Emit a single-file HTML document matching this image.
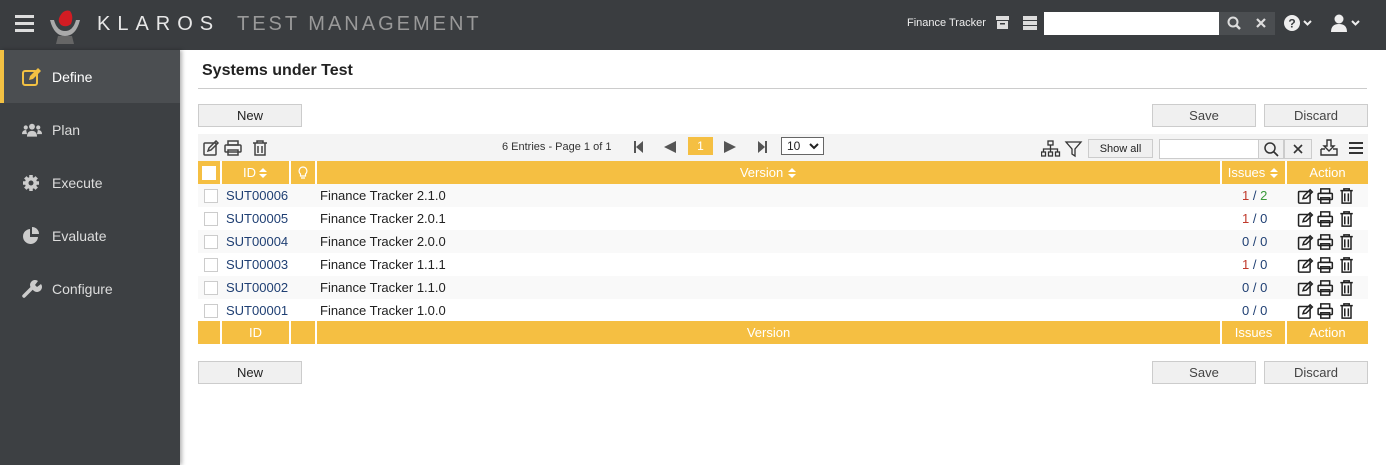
<!DOCTYPE html>
<html><head><style>
*{box-sizing:border-box;margin:0;padding:0}
body{width:1386px;height:465px;overflow:hidden;font-family:"Liberation Sans",sans-serif;background:#fff;position:relative;font-size:13px;color:#222}
.top{position:absolute;left:0;top:0;width:1386px;height:50px;background:#3a3d40}
.side{position:absolute;left:0;top:50px;width:180px;height:415px;background:#3d4043;box-shadow:2px 0 4px rgba(0,0,0,.3)}
.item{height:53px;display:flex;align-items:center;padding-left:22px;color:#ddd;font-size:14px}
.item svg{margin-right:10px}
.item.act{background:#4b4e51;border-left:4px solid #f3c143;padding-left:18px;color:#fff}
.abs{position:absolute}
.btn{position:absolute;height:23px;background:#f0f0f0;border:1px solid #ccc;font-size:13px;display:flex;align-items:center;justify-content:center;color:#222}
.row{position:absolute;left:198px;width:1170px;height:23px;font-size:13px}
.c{position:absolute;top:0;height:100%;display:flex;align-items:center}
.hdr{background:#f5bf42;color:#fff}
.hdr .c{border-right:2px solid #fff;justify-content:center}
.cb{width:14px;height:14px;border:1px solid #ccc;background:#fff}
.id{color:#1f3f73}
</style></head><body>
<div class="top">
<svg class="abs" style="left:15px;top:15px" width="19" height="17"><rect y="0" width="19" height="3" fill="#ddd"/><rect y="7" width="19" height="3" fill="#ddd"/><rect y="14" width="19" height="3" fill="#ddd"/></svg>
<svg class="abs" style="left:48px;top:8px" width="34" height="36"><path d="M2 12 Q6 28 17 28 Q28 28 32 12 L28 12 Q25 23 17 23 Q9 23 6 12Z" fill="#aaa"/><path d="M10 28 L24 28 L26 36 L8 36Z" fill="#666"/><path d="M12 8 Q16 1 22 3 Q26 8 23 16 Q18 20 13 17 Q9 13 12 8Z" fill="#d21c23"/></svg>
<div class="abs" style="left:97px;top:13px;font-size:20px;letter-spacing:7px;color:#e8e8e8">KLAROS</div>
<div class="abs" style="left:237px;top:13px;font-size:20px;letter-spacing:3px;color:#999">TEST MANAGEMENT</div>
<div class="abs" style="left:907px;top:17px;font-size:11px;color:#eee">Finance Tracker</div>
<svg class="abs" style="left:996px;top:16px" width="13" height="13"><rect width="13" height="4" fill="#ddd"/><rect x="1" y="5" width="11" height="8" fill="#ddd"/><rect x="4" y="7" width="5" height="1.5" fill="#3a3d40"/></svg>
<svg class="abs" style="left:1023px;top:16px" width="14" height="14"><rect width="14" height="4" fill="#ddd"/><rect y="5" width="14" height="4" fill="#ddd"/><rect y="10" width="14" height="4" fill="#ddd"/></svg>
<div class="abs" style="left:1044px;top:12px;width:175px;height:23px;background:#fff"></div>
<div class="abs" style="left:1219px;top:12px;width:56px;height:23px;background:#4b4e51"></div>
<svg class="abs" style="left:1227px;top:16px" width="14" height="14"><circle cx="6" cy="6" r="4.5" stroke="#ddd" stroke-width="2" fill="none"/><path d="M9 9L13 13" stroke="#ddd" stroke-width="2.5"/></svg>
<svg class="abs" style="left:1256px;top:18px" width="10" height="10"><path d="M1 1L9 9M9 1L1 9" stroke="#ddd" stroke-width="2.2"/></svg>
<svg class="abs" style="left:1284px;top:14px" width="30" height="18"><circle cx="8" cy="9" r="8" fill="#eee"/><text x="8" y="13.5" font-size="12" font-weight="bold" text-anchor="middle" fill="#3a3d40">?</text><path d="M20 7l3.5 3.5L27 7" stroke="#eee" stroke-width="2" fill="none"/></svg>
<svg class="abs" style="left:1331px;top:14px" width="30" height="18"><circle cx="8" cy="5" r="4.5" fill="#eee"/><path d="M0 18Q0 10 8 10Q16 10 16 18Z" fill="#eee"/><path d="M21 7l3.5 3.5L28 7" stroke="#eee" stroke-width="2" fill="none"/></svg>
</div>
<div class="side">
<div class="item act"><svg width="20" height="18"><rect x="1" y="3" width="14" height="14" rx="2" stroke="#f3c143" stroke-width="2" fill="none"/><path d="M7 12l1-4 8-8 3 3-8 8z" fill="#f3c143"/></svg>Define</div>
<div class="item"><svg width="20" height="16" viewBox="0 0 24 16"><circle cx="12" cy="4" r="3.5" fill="#ccc"/><circle cx="4.5" cy="5" r="2.5" fill="#ccc"/><circle cx="19.5" cy="5" r="2.5" fill="#ccc"/><path d="M6 16Q6 9 12 9Q18 9 18 16Z" fill="#ccc"/><path d="M0 13Q0 8 5 8L6 13ZM24 13Q24 8 19 8L18 13Z" fill="#ccc"/></svg>Plan</div>
<div class="item"><svg width="20" height="18"><circle cx="9" cy="9" r="6" fill="#ccc"/><g stroke="#ccc" stroke-width="3.5"><path d="M9 1v16M1 9h16M3.3 3.3l11.4 11.4M14.7 3.3L3.3 14.7"/></g><circle cx="9" cy="9" r="2.5" fill="#3d4043"/></svg>Execute</div>
<div class="item"><svg width="20" height="18"><path d="M8 2A7.5 7.5 0 1 0 16 10L8 10Z" fill="#ccc"/><path d="M10 0A7 7 0 0 1 17 7L10 7Z" fill="#ccc"/></svg>Evaluate</div>
<div class="item"><svg width="20" height="18"><path d="M2 16L10 8" stroke="#ccc" stroke-width="3.5" stroke-linecap="round"/><path d="M9 8A5 5 0 0 1 16 1L13 5 15 7 19 4A5 5 0 0 1 12 11Z" fill="#ccc"/></svg>Configure</div>
</div>
<div class="abs" style="left:202px;top:62px;font-size:16px;font-weight:bold;color:#222">Systems under Test</div>
<div class="abs" style="left:198px;top:88px;width:1169px;height:1px;background:#ccc"></div>
<div class="btn" style="left:198px;top:104px;width:104px">New</div>
<div class="btn" style="left:1152px;top:104px;width:104px;color:#444">Save</div>
<div class="btn" style="left:1264px;top:104px;width:104px;color:#444">Discard</div>
<div class="abs" style="left:198px;top:134px;width:1170px;height:27px;background:#f4f4f4"></div>
<svg class="abs" style="left:203px;top:140px" width="70" height="16" fill="none" stroke="#444" stroke-width="1.5"><rect x="1" y="3" width="12" height="12" rx="1"/><path d="M5 11l1-3 7-7 2 2-7 7z"/><rect x="25" y="1" width="10" height="4"/><rect x="22" y="5" width="16" height="7" rx="1"/><rect x="25" y="10" width="10" height="5"/><path d="M50 3h14M54 3V1h6v2M52 3v12h10V3M55 6v7M59 6v7"/></svg>
<div class="abs" style="left:502px;top:141px;font-size:11px;color:#333">6 Entries - Page 1 of 1</div>
<svg class="abs" style="left:634px;top:140px" width="140" height="14" fill="#555"><rect x="0" y="1" width="2" height="12"/><path d="M2 7l7-6v12z"/><path d="M30 7l12-6v12z"/><path d="M90 1l12 6-12 6z"/><path d="M124 1l7 6-7 6z"/><rect x="131" y="1" width="2" height="12"/></svg>
<div class="abs" style="left:688px;top:137px;width:25px;height:18px;background:#f5bf42;color:#fff;font-size:12px;text-align:center;line-height:18px">1</div>
<div class="abs" style="left:781px;top:137px;width:43px;height:18px;border:1px solid #666;background:#fff;font-size:12px;padding-left:5px;line-height:16px">10<svg style="position:absolute;right:4px;top:5px" width="10" height="7"><path d="M1 1l4 4 4-4" stroke="#222" stroke-width="2" fill="none"/></svg></div>
<svg class="abs" style="left:1041px;top:140px" width="42" height="18" fill="none" stroke="#333" stroke-width="1.3"><rect x="7" y="1" width="5" height="4"/><path d="M9.5 5v4M2.5 12V9h14v3M9.5 9v3"/><rect x="0.5" y="12" width="4" height="4"/><rect x="7.5" y="12" width="4" height="4"/><rect x="14.5" y="12" width="4" height="4"/><path d="M25 2h15l-6 7v7l-3-2V9z"/></svg>
<div class="btn" style="left:1088px;top:139px;width:65px;height:19px;font-size:11px">Show all</div>
<div class="abs" style="left:1159px;top:139px;width:100px;height:20px;background:#fff;border:1px solid #ccc"></div>
<div class="abs" style="left:1258px;top:139px;width:26px;height:20px;border:1px solid #ccc;background:#f0f0f0"></div>
<div class="abs" style="left:1284px;top:139px;width:28px;height:20px;border:1px solid #ccc;background:#f0f0f0"></div>
<svg class="abs" style="left:1264px;top:142px" width="15" height="15"><circle cx="6" cy="6" r="5" stroke="#333" stroke-width="1.5" fill="none"/><path d="M9.5 9.5L14 14" stroke="#333" stroke-width="1.7"/></svg>
<svg class="abs" style="left:1293px;top:144px" width="10" height="10"><path d="M1 1L9 9M9 1L1 9" stroke="#333" stroke-width="1.6"/></svg>
<svg class="abs" style="left:1320px;top:139px" width="48" height="18" fill="none" stroke="#333" stroke-width="1.4"><path d="M7 1h4v6h3l-5 5-5-5h3z"/><path d="M1 10v6h16v-6h-4M5 10H1"/><path d="M29 4h14M29 9h14M29 14h14" stroke-width="2"/></svg>
<div class="row hdr" style="top:161px">
<div class="c" style="left:0;width:24px"><div class="cb" style="border-color:#fff"></div></div>
<div class="c" style="left:24px;width:69px">ID<svg width="10" height="12" style="margin-left:2px"><path d="M1 5l4-4 4 4zM1 7l4 4 4-4z" fill="#fff"/></svg></div>
<div class="c" style="left:93px;width:26px"><svg width="10" height="14"><path d="M5 1a4 4 0 0 0-2.5 7V10h5V8A4 4 0 0 0 5 1zM3 12h4" stroke="#fff" fill="none" stroke-width="1.2"/></svg></div>
<div class="c" style="left:119px;width:905px">Version<svg width="10" height="12" style="margin-left:4px"><path d="M1 5l4-4 4 4zM1 7l4 4 4-4z" fill="#fff"/></svg></div>
<div class="c" style="left:1024px;width:65px">Issues<svg width="10" height="12" style="margin-left:4px"><path d="M1 5l4-4 4 4zM1 7l4 4 4-4z" fill="#fff"/></svg></div>
<div class="c" style="left:1089px;width:81px;border-right:none">Action</div>
</div>
<div id="rows"></div>
<div class="row hdr" style="top:321px">
<div class="c" style="left:0;width:24px"></div>
<div class="c" style="left:24px;width:69px">ID</div>
<div class="c" style="left:93px;width:26px"></div>
<div class="c" style="left:119px;width:905px">Version</div>
<div class="c" style="left:1024px;width:65px">Issues</div>
<div class="c" style="left:1089px;width:81px;border-right:none">Action</div>
</div>
<div class="btn" style="left:198px;top:361px;width:104px">New</div>
<div class="btn" style="left:1152px;top:361px;width:104px;color:#444">Save</div>
<div class="btn" style="left:1264px;top:361px;width:104px;color:#444">Discard</div>
<script>
var d=[["SUT00006","2.1.0",1,2],["SUT00005","2.0.1",1,0],["SUT00004","2.0.0",0,0],["SUT00003","1.1.1",1,0],["SUT00002","1.1.0",0,0],["SUT00001","1.0.0",0,0]];
var ic='<svg width="64" height="16" viewBox="0 0 66 18" fill="none" stroke="#222" stroke-width="1.7"><rect x="1" y="4" width="13" height="13" rx="1"/><path d="M6 12l1-3 7-7 2.5 2.5-7 7z"/><rect x="26" y="1" width="10" height="5"/><rect x="23" y="6" width="16" height="7" rx="1"/><rect x="26" y="11" width="10" height="6"/><path d="M48 3h14M52 3V1h6v2M50 3v14h10V3M53 6v9M57 6v9"/></svg>';
var h='';d.forEach(function(r,i){h+='<div class="row" style="top:'+(184+i*23)+'px;background:'+(i%2==0?'#f9f9f9':'#fff')+'"><div class="c" style="left:6px"><div class="cb"></div></div><div class="c id" style="left:28px">'+r[0]+'</div><div class="c" style="left:122px">Finance Tracker '+r[1]+'</div><div class="c" style="left:1044px"><span style="color:'+(r[2]?'#c0392b':'#1f3f73')+'">'+r[2]+'</span>&nbsp;<span style="color:#1f3f73">/</span>&nbsp;<span style="color:'+(r[3]?'#3a9a3a':'#1f3f73')+'">'+r[3]+'</span></div><div class="c" style="left:1097px">'+ic+'</div></div>'});
document.getElementById('rows').innerHTML=h;
</script>
</body></html>
